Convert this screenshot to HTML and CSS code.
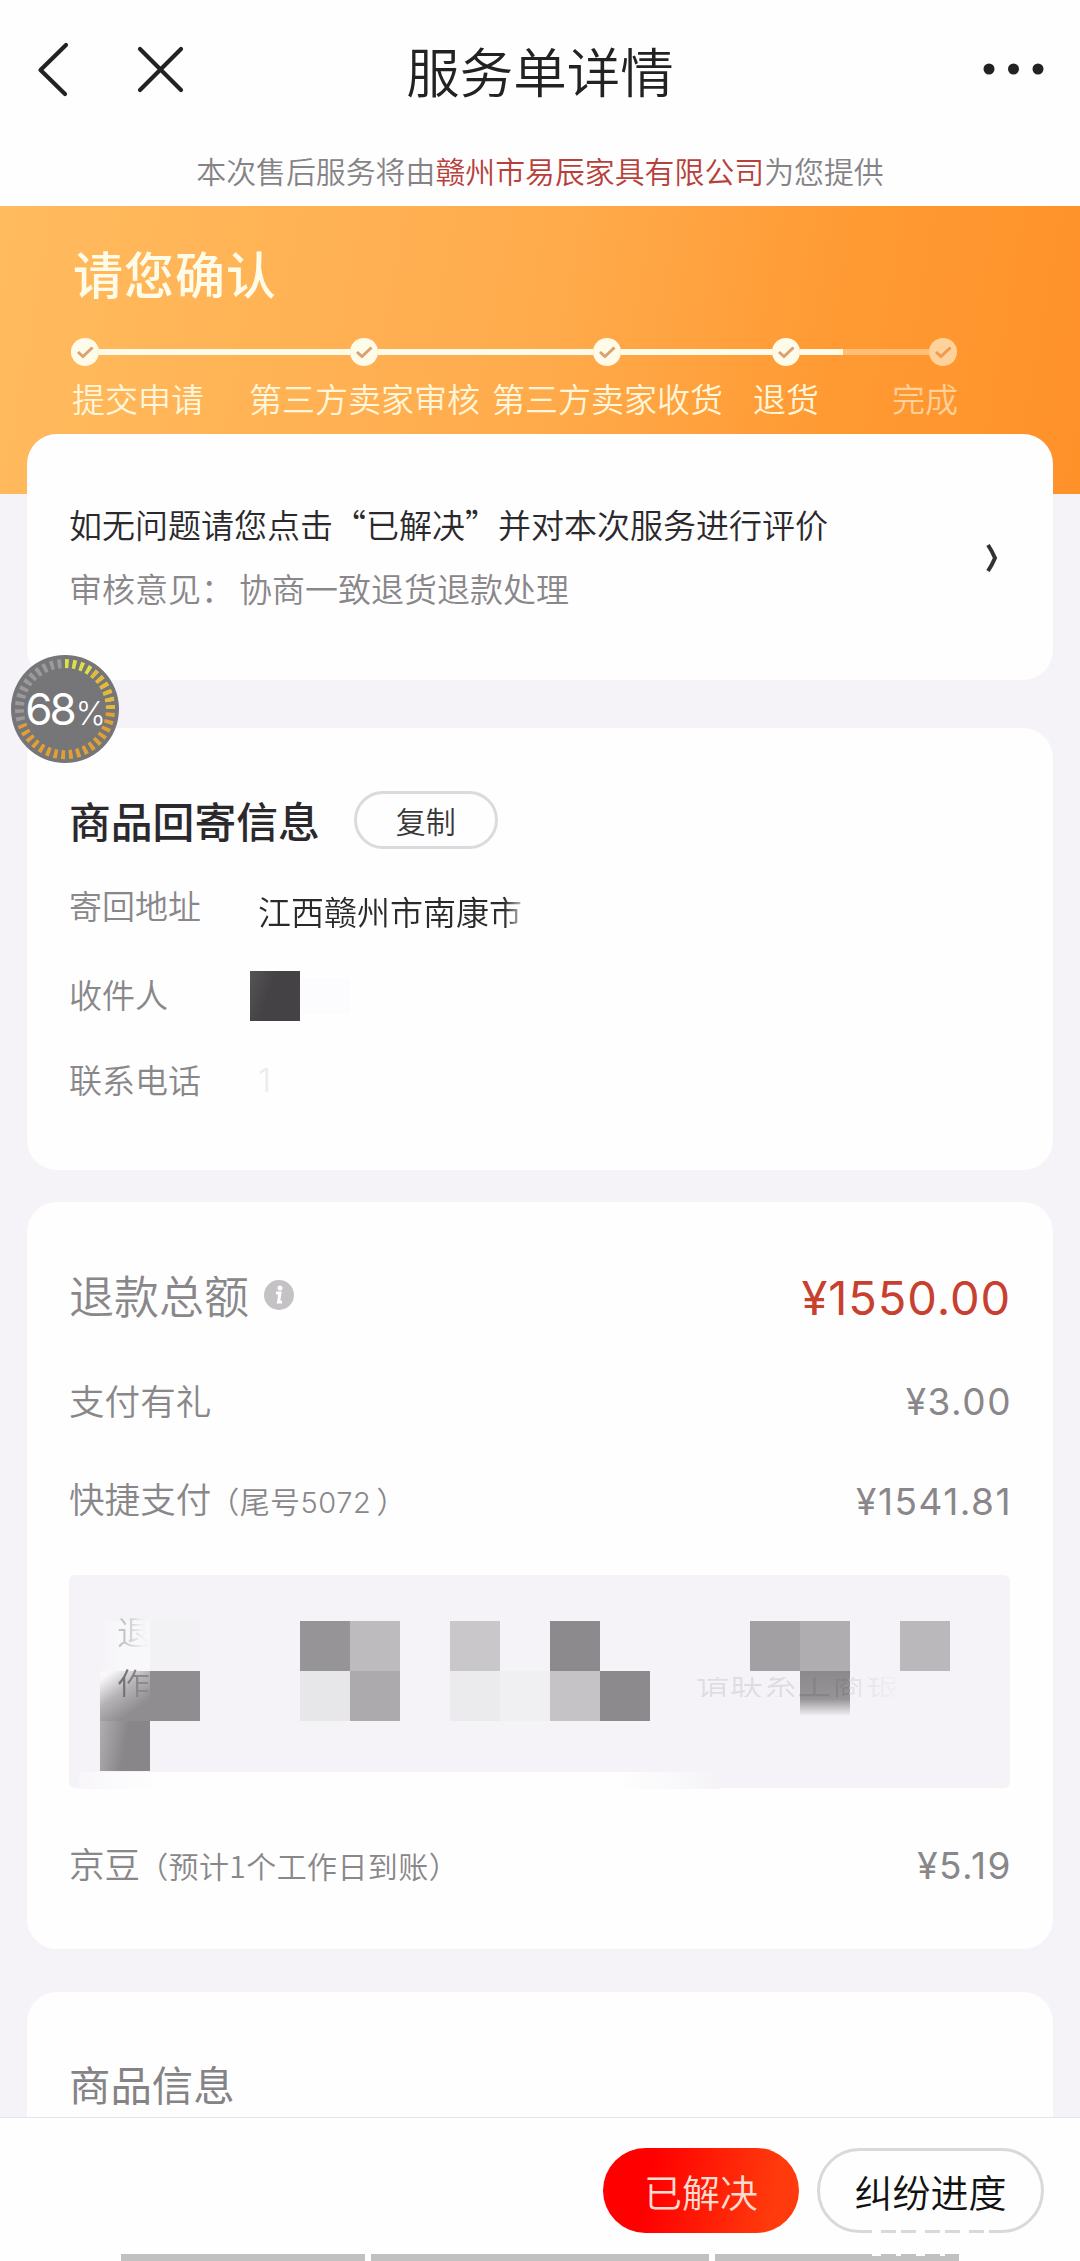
FILE: index.html
```html
<!DOCTYPE html>
<html lang="zh-CN">
<head>
<meta charset="utf-8">
<title>服务单详情</title>
<link rel="stylesheet" href="styles.css">
</head>
<body>
<div class="page">
  <header class="nav">
    <svg class="nav-left" width="160" height="60" viewBox="0 0 160 60" fill="none" stroke="#222" stroke-width="4.200" stroke-linecap="round" stroke-linejoin="round">
      <path d="M38 6 L12.500 31 L37 55"/>
      <path d="M112 10 L153 51 M153 10 L112 51"/>
    </svg>
    <h1 class="nav-title">服务单详情</h1>
    <svg class="nav-more" width="64" height="12" viewBox="0 0 64 12" fill="#222"><circle cx="7" cy="6" r="5.500"/><circle cx="31.500" cy="6" r="5.500"/><circle cx="56" cy="6" r="5.500"/></svg>
  </header>
  <p class="provider">本次售后服务将由<span class="company">赣州市易辰家具有限公司</span>为您提供</p>

  <section class="banner">
    <h2 class="banner-title">请您确认</h2>
    <div class="track">
      <svg class="node" viewBox="0 0 28 28"><circle cx="14" cy="14" r="14"/><path d="M7 14 L12 18.500 L21.500 9.500"/></svg>
      <i class="seg seg-a"></i>
      <svg class="node" viewBox="0 0 28 28"><circle cx="14" cy="14" r="14"/><path d="M7 14 L12 18.500 L21.500 9.500"/></svg>
      <i class="seg seg-b"></i>
      <svg class="node" viewBox="0 0 28 28"><circle cx="14" cy="14" r="14"/><path d="M7 14 L12 18.500 L21.500 9.500"/></svg>
      <i class="seg seg-c"></i>
      <svg class="node" viewBox="0 0 28 28"><circle cx="14" cy="14" r="14"/><path d="M7 14 L12 18.500 L21.500 9.500"/></svg>
      <i class="seg seg-d"></i>
      <i class="seg seg-todo"></i>
      <svg class="node node-todo" viewBox="0 0 28 28"><circle cx="14" cy="14" r="14"/><path d="M7 14 L12 18.500 L21.500 9.500"/></svg>
    </div>
    <div class="labels">
      <span class="label-apply">提交申请</span>
      <span class="label-review">第三方卖家审核</span>
      <span class="label-receive">第三方卖家收货</span>
      <span class="label-return">退货</span>
      <span class="label-done">完成</span>
    </div>
  </section>

  <main class="cards">
    <section class="card confirm">
      <div class="confirm-text">
        <p class="confirm-main">如无问题请您点击“已解决”并对本次服务进行评价</p>
        <p class="confirm-sub">审核意见：<span class="opinion">协商一致退货退款处理</span></p>
      </div>
      <svg class="chevron" width="14" height="30" viewBox="0 0 14 30" fill="none" stroke="#333" stroke-width="4"><path d="M3 2 Q7 8 10 15 Q7 22 3 28"/></svg>
      <div class="progress">
        <svg class="ring" viewBox="0 0 108 108" fill="none">
          <circle cx="54" cy="54" r="54" fill="#767577"/>
          <g stroke-width="9" transform="rotate(-90 54 54)">
            <path d="M38.400 11.200 A45.500 45.500 0 0 1 99.500 54" stroke="#9b999b" pathLength="116" stroke-dasharray="5 5" stroke-dashoffset="4"/>
            <path d="M99.500 54 A45.500 45.500 0 0 1 54 99.500" stroke="#dde04a" pathLength="95" stroke-dasharray="5 5"/>
            <path d="M54 99.500 A45.500 45.500 0 0 1 38.400 11.200" stroke="#e0a035" pathLength="169" stroke-dasharray="5 5" stroke-dashoffset="5"/>
            <path d="M90 82 A45.500 45.500 0 0 1 54 99.500" stroke="#e5b83d" pathLength="55" stroke-dasharray="5 5"/>
          </g>
        </svg>
        <span class="percent">68<small>%</small></span>
      </div>
    </section>

    <section class="card return">
      <div class="return-head"><h3>商品回寄信息</h3><button class="copy">复制</button></div>
      <div class="row row-address"><span class="key">寄回地址</span><span class="address">江西赣州市南康市</span></div>
      <div class="row row-person"><span class="key">收件人</span><i class="mask"></i><i class="mask-tail"></i></div>
      <div class="row row-phone"><span class="key">联系电话</span><span class="phone">1</span></div>
    </section>

    <section class="card refund">
      <div class="money total"><span>退款总额</span>
        <svg class="info" width="30" height="30" viewBox="0 0 30 30"><circle cx="15" cy="15" r="15" fill="#c4c2c5"/><circle cx="16" cy="8" r="2.500" fill="#fff"/><path d="M12 13 H16 L14.500 22 H18" fill="none" stroke="#fff" stroke-width="3"/></svg>
        <b class="amount">¥1550.00</b></div>
      <div class="money gift"><span>支付有礼</span><b class="amount">¥3.00</b></div>
      <div class="money quick"><span>快捷支付<small>（尾号<span class="tail">5072</span>）</small></span><b class="amount">¥1541.81</b></div>
      <div class="tip">
        <i class="erase"></i>
        <div class="mosaic">
          <i class="m0 c1 r1"></i><i class="m1 c2 r1"></i><i class="m2 c5 r1"></i><i class="m3 c6 r1"></i><i class="m4 c8 r1"></i><i class="m5 c10 r1"></i><i class="m6 c14 r1"></i><i class="m7 c15 r1"></i><i class="m8 c17 r1"></i>
          <i class="m9 c1 r2"></i><i class="m10 c2 r2"></i><i class="m11 c5 r2"></i><i class="m12 c6 r2"></i><i class="m13 c8 r2"></i><i class="m14 c9 r2"></i><i class="m15 c10 r2"></i><i class="m5 c11 r2"></i><i class="m16 c15 r2"></i>
          <i class="m17 c1 r3"></i>
        </div>
        <span class="ghost ghost-a">退</span>
        <span class="ghost ghost-b">作</span>
        <span class="ghost ghost-c">请联系工商银</span>
      </div>
      <div class="money beans"><span>京豆<small>（预计1个工作日到账）</small></span><b class="amount">¥5.19</b></div>
    </section>

    <section class="card goods"><h3>商品信息</h3></section>
  </main>

  <footer class="actions">
    <div class="buttons">
      <button class="btn solved">已解决</button>
      <button class="btn dispute">纠纷进度</button>
    </div>
    <div class="strip"><i></i><i></i><i></i></div>
    <i class="wear wear-top"></i><i class="wear wear-bottom"></i>
  </footer>
</div>
</body>
</html>
```
FILE: styles.css
```css
* { box-sizing: border-box; margin: 0; padding: 0; }
body {
  width: 1080px;
  background: #f5f3f7;
  font-family: "Noto Sans CJK SC", "Noto Sans", sans-serif;
  font-weight: 350;
  color: #2b292c;
}
i { display: block; font-style: normal; }
button { font: inherit; background: none; }
.page { height: 2261px; display: flex; flex-direction: column; overflow: hidden; white-space: nowrap; }

.nav { height: 142px; display: grid; grid-template-columns: 200px 1fr 200px; align-items: center; background: #fefefe; }
.nav-left { margin: -4px 0 0 28px; }
.nav-title { font-size: 53.5px; line-height: 80px; margin-top: -3px; font-weight: 350; text-align: center; color: #222; }
.nav-more { justify-self: end; margin: -4px 34px 0 0; }
.provider { height: 64px; line-height: 56px; font-size: 29.9px; text-align: center; color: #858386; background: #fefefe; }
.company { color: #b8403a; }

.banner { height: 288px; padding-left: 71px; background: linear-gradient(100deg, #ffbb5e 0%, #ffab4c 50%, #ff9a33 76%, #ff9129 100%); color: #fff6da; flex: none; }
.banner-title { padding: 26px 0 0 2px; font-size: 50px; line-height: 80px; letter-spacing: 1px; font-weight: 500; color: #fffbe9; }
.track { display: flex; align-items: center; height: 28px; margin-top: 26px; }
.node { width: 28px; height: 28px; flex: none; fill: #fffbe9; }
.node path { fill: none; stroke: #d9a273; stroke-width: 3; }
.node-todo { fill: #ffd29b; }
.node-todo path { stroke: #ee9a50; }
.seg { height: 6px; background: #fffbe9; }
.seg-a { width: 251px; }
.seg-b { width: 215px; }
.seg-c { width: 151px; }
.seg-d { width: 43px; }
.seg-todo { width: 86px; background: #ffbd75; }
.labels { display: flex; margin: 7px 0 0 1px; font-size: 33px; line-height: 50px; }
.label-review { margin-left: 45px; }
.label-receive { margin-left: 12px; }
.label-return { margin-left: 30px; }
.label-done { margin-left: 73px; color: #ffd09a; }

.cards { flex: none; height: 1683px; margin-top: -60px; padding: 0 27px; display: flex; flex-direction: column; }
.card { background: #fefefe; border-radius: 30px; padding: 0 43px 0 42px; flex: none; }
.confirm { position: relative; height: 246px; display: flex; justify-content: space-between; padding-top: 65px; }
.confirm-main { font-size: 33px; line-height: 50px; }
.confirm-sub { font-size: 33px; line-height: 50px; margin-top: 14px; color: #89878a; }
.opinion { margin-left: 5px; }
.chevron { margin: 44px 11px 0 0; }
.progress { position: absolute; left: -16px; top: 221px; width: 108px; height: 108px; display: flex; align-items: center; justify-content: center; z-index: 2; }
.ring { position: absolute; inset: 0; }
.percent { position: relative; font-family: "Inter", sans-serif; font-size: 44px; font-weight: 400; letter-spacing: -3px; color: #fff; line-height: 60px; padding: 4px 2px 0 0; }
.percent small { font-size: 32px; font-weight: 300; margin-left: 2px; }

.return { height: 442px; margin-top: 48px; padding-top: 63px; }
.return-head { display: flex; align-items: center; height: 57px; }
.return-head h3 { font-size: 41.8px; line-height: 60px; font-weight: 500; }
.copy { width: 144px; height: 58px; margin-left: 34px; border: 3px solid #dddadd; border-radius: 29px; font-size: 30px; line-height: 48px; color: #39373a; }
.row { display: flex; align-items: center; height: 50px; font-size: 33px; line-height: 50px; }
.key { width: 181px; color: #89878a; margin-top: -4px; }
.row-address { margin-top: 34px; }
.address { width: 278px; margin: 7px 0 0 8px; background: linear-gradient(90deg, #2b292c 246px, #fefefe 272px); background-clip: text; color: transparent; }
.row-person { margin-top: 39px; }
.mask { width: 50px; height: 50px; background: linear-gradient(110deg, #555355, #444244 40%); }
.mask-tail { width: 50px; height: 36px; background: #fcfbfd; }
.row-phone { margin-top: 35px; }
.phone { margin: -3px 0 0 8px; font-family: "Inter", sans-serif; font-weight: 300; color: #ecebed; }

.refund { height: 747px; margin-top: 32px; padding-top: 58px; }
.money { display: flex; align-items: center; height: 70px; font-size: 35.6px; line-height: 60px; color: #89878a; }
.money small { font-size: 30px; margin-left: -2px; letter-spacing: .4px; }
.tail { font-family: "Inter", sans-serif; font-weight: 300; font-size: 29px; letter-spacing: .6px; margin-right: 5px; }
.amount { margin: 4px -2px 0 auto; font-family: "Inter", sans-serif; font-weight: 400; font-size: 37px; letter-spacing: 1.5px; }
.total { font-size: 45px; }
.total .amount { font-size: 47px; margin: 6px -1px 0 auto; letter-spacing: .9px; color: #c8402f; }
.info { margin-left: 15px; }
.gift { margin-top: 35px; }
.quick { margin-top: 30px; }
.tip { position: relative; height: 213px; margin-top: 40px; background: #f5f3f7; border-radius: 6px; padding: 46px 0 0 31px; }
.erase { position: absolute; left: 10px; top: 197px; width: 640px; height: 17px; background: linear-gradient(90deg, #f8f6fa, #fefefe 80px, #fefefe 540px, #f5f3f7); }
.mosaic { display: grid; grid-template-columns: repeat(18, 50px); grid-template-rows: repeat(3, 50px); }
.r1 { grid-row: 1; } .r2 { grid-row: 2; } .r3 { grid-row: 3; }
.c1 { grid-column: 1; } .c2 { grid-column: 2; } .c5 { grid-column: 5; } .c6 { grid-column: 6; }
.c8 { grid-column: 8; } .c9 { grid-column: 9; } .c10 { grid-column: 10; } .c11 { grid-column: 11; }
.c14 { grid-column: 14; } .c15 { grid-column: 15; } .c17 { grid-column: 17; }
.m0 { background: linear-gradient(90deg, #f5f3f7, #f8f7f9 20px); }
.m1 { background: #f2f1f3; }
.m2 { background: #969497; }
.m3 { background: #bdbbbe; }
.m4 { background: #c9c7ca; }
.m5 { background: #8c8a8d; }
.m6 { background: #a2a0a3; }
.m7 { background: #afadb0; }
.m8 { background: #bab8bb; }
.m9 { background: linear-gradient(145deg, #f8f7f9 10%, #b5b3b6 42%, #8f8d90 75%); }
.m10 { background: #8f8d90; }
.m11 { background: #e7e6e8; }
.m12 { background: #acaaad; }
.m13 { background: #ebeaec; }
.m14 { background: #f0eff2; }
.m15 { background: #c5c3c6; }
.m16 { height: 46px; background: linear-gradient(180deg, #8b898c, #969497 28px, #f5f3f7 45px); }
.m17 { background: linear-gradient(100deg, #b0aeb1, #888689 50%); }
.ghost { position: absolute; font-size: 33px; line-height: 40px; }
.ghost-a { left: 48px; top: 36px; background: linear-gradient(90deg, #c5c3c6 8px, #f3f2f4 26px); background-clip: text; color: transparent; }
.ghost-b { left: 48px; top: 88px; background: linear-gradient(90deg, #757376 8px, #8c8a8d 22px); background-clip: text; color: transparent; clip-path: inset(0 0 6px 0); }
.ghost-c { left: 627px; top: 87px; letter-spacing: 1px; background: linear-gradient(90deg, #dedce0 0 100px, #868487 104px 153px, #e3e1e5 154px, #f3f1f5 208px); background-clip: text; color: transparent; clip-path: inset(15px 0 5px 0); }
.beans { margin-top: 41px; }

.goods { margin-top: 43px; padding-top: 61px; height: 160px; color: #858386; }
.goods h3 { font-size: 41.4px; line-height: 60px; font-weight: 400; }

.actions { position: relative; z-index: 3; flex: none; height: 144px; border-top: 1px solid #e6e4e8; background: #fefefe; }
.buttons { display: flex; justify-content: flex-end; gap: 18px; padding: 30px 36px 0 0; }
.btn { height: 85px; border-radius: 43px; font-size: 38px; line-height: 76px; border: 0; }
.solved { width: 196px; background: linear-gradient(100deg, #ff0000 25%, #ff3a0c 85%); color: #ffdcd0; }
.dispute { width: 227px; border: 3px solid #dad8db; color: #111; }
.strip { display: flex; gap: 6px; height: 7px; margin-top: 21px; padding: 0 121px; }
.strip i { flex: 244; background: #c1c1c1; }
.strip i:nth-child(2) { flex: 338; }
.wear { position: absolute; left: 872px; background: repeating-linear-gradient(90deg, #fefefe 0 9px, transparent 9px 24px, #fefefe 24px 29px, transparent 29px 44px); }
.wear-top { top: 112px; width: 130px; height: 3px; }
.wear-bottom { top: 136px; width: 86px; height: 2px; }
```
